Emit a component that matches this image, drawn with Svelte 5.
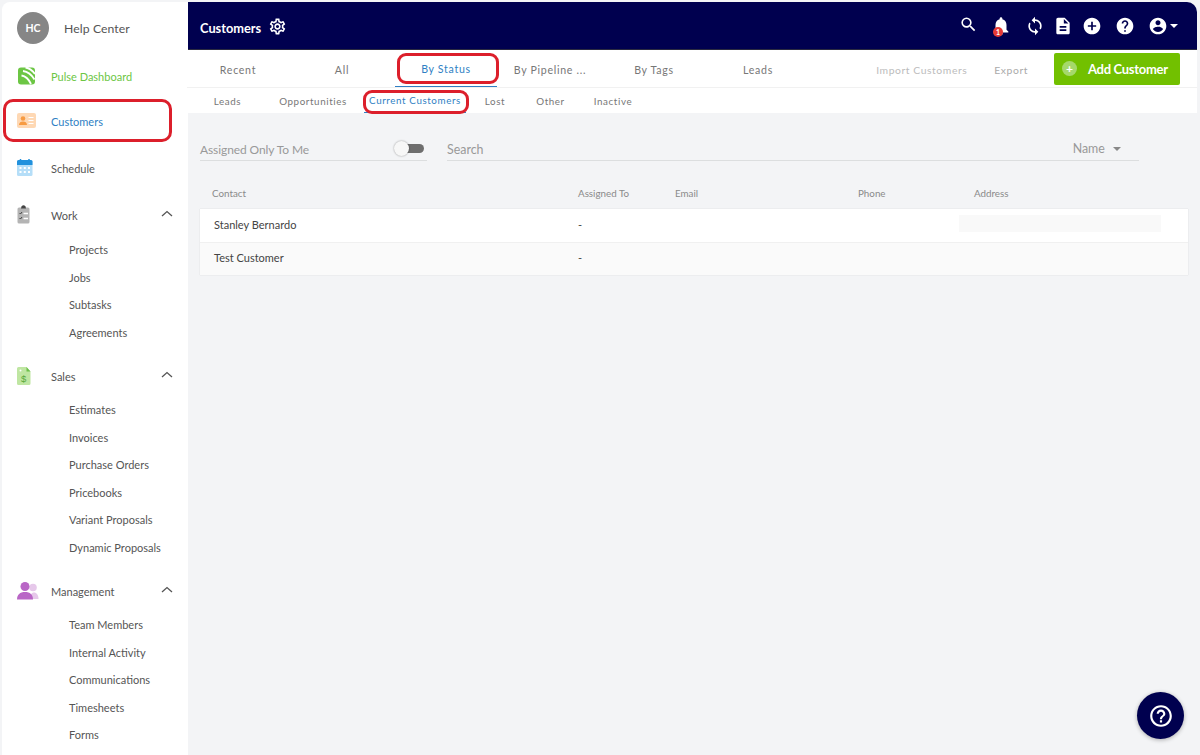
<script>
  const tabs = [
    { label: 'Recent' }, { label: 'All' }, { label: 'By Status', active: true, mark: true },
    { label: 'By Pipeline ...' }, { label: 'By Tags' }, { label: 'Leads' }
  ];
  const subs = [
    { label: 'Leads' }, { label: 'Opportunities' }, { label: 'Current Customers', active: true, mark: true },
    { label: 'Lost' }, { label: 'Other' }, { label: 'Inactive' }
  ];
  const icons = {
    search: 'M15.5 14h-.79l-.28-.27A6.471 6.471 0 0 0 16 9.5 6.5 6.5 0 1 0 9.5 16c1.61 0 3.09-.59 4.23-1.57l.27.28v.79l5 4.99L20.49 19l-4.99-5zm-6 0C7.01 14 5 11.99 5 9.5S7.01 5 9.5 5 14 7.01 14 9.5 11.99 14 9.5 14z',
    bell: 'M12 22c1.1 0 2-.9 2-2h-4c0 1.1.9 2 2 2zm6-6v-5c0-3.07-1.63-5.64-4.5-6.32V4c0-.83-.67-1.5-1.5-1.5s-1.5.67-1.5 1.5v.68C7.64 5.36 6 7.92 6 11v5l-2 2v1h16v-1l-2-2z',
    sync: 'M12 4V1L8 5l4 4V6c3.31 0 6 2.69 6 6 0 1.01-.25 1.97-.7 2.8l1.46 1.46C19.54 15.03 20 13.57 20 12c0-4.42-3.58-8-8-8zm0 14c-3.31 0-6-2.69-6-6 0-1.01.25-1.97.7-2.8L5.24 7.74C4.46 8.97 4 10.43 4 12c0 4.42 3.58 8 8 8v3l4-4-4-4v3z',
    doc: 'M14 2H6c-1.1 0-1.99.9-1.99 2L4 20c0 1.1.89 2 1.99 2H18c1.1 0 2-.9 2-2V8l-6-6zm2 16H8v-2h8v2zm0-4H8v-2h8v2zm-3-5V3.5L18.5 9H13z',
    add: 'M12 2C6.48 2 2 6.48 2 12s4.48 10 10 10 10-4.48 10-10S17.52 2 12 2zm5 11h-4v4h-2v-4H7v-2h4V7h2v4h4v2z',
    help: 'M12 2C6.48 2 2 6.48 2 12s4.48 10 10 10 10-4.48 10-10S17.52 2 12 2zm1 17h-2v-2h2v2zm2.07-7.75l-.9.92C13.45 12.9 13 13.5 13 15h-2v-.5c0-1.1.45-2.1 1.17-2.83l1.24-1.26c.37-.36.59-.86.59-1.41 0-1.1-.9-2-2-2s-2 .9-2 2H8c0-2.21 1.79-4 4-4s4 1.79 4 4c0 .88-.36 1.68-.93 2.25z',
    user: 'M12 2C6.48 2 2 6.48 2 12s4.48 10 10 10 10-4.48 10-10S17.52 2 12 2zm0 3c1.66 0 3 1.34 3 3s-1.34 3-3 3-3-1.34-3-3 1.34-3 3-3zm0 14.2c-2.5 0-4.71-1.28-6-3.22.03-1.99 4-3.08 6-3.08 1.99 0 5.97 1.09 6 3.08-1.29 1.94-3.5 3.22-6 3.22z',
    gear: 'M19.43 12.98c.04-.32.07-.64.07-.98 0-.34-.03-.66-.07-.98l2.11-1.65c.19-.15.24-.42.12-.64l-2-3.46c-.09-.16-.26-.25-.44-.25-.06 0-.12.01-.17.03l-2.49 1c-.52-.4-1.08-.73-1.69-.98l-.38-2.65C14.46 2.18 14.25 2 14 2h-4c-.25 0-.46.18-.49.42l-.38 2.65c-.61.25-1.17.59-1.69.98l-2.49-1c-.06-.02-.12-.03-.18-.03-.17 0-.34.09-.43.25l-2 3.46c-.13.22-.07.49.12.64l2.11 1.65c-.04.32-.07.65-.07.98 0 .33.03.66.07.98l-2.11 1.65c-.19.15-.24.42-.12.64l2 3.46c.09.16.26.25.44.25.06 0 .12-.01.17-.03l2.49-1c.52.4 1.08.73 1.69.98l.38 2.65c.03.24.24.42.49.42h4c.25 0 .46-.18.49-.42l.38-2.65c.61-.25 1.17-.59 1.69-.98l2.49 1c.06.02.12.03.18.03.17 0 .34-.09.43-.25l2-3.46c.12-.22.07-.49-.12-.64l-2.11-1.65zm-1.98-1.71c.04.31.05.52.05.73 0 .21-.02.43-.05.73l-.14 1.13.89.7 1.08.84-.7 1.21-1.27-.51-1.04-.42-.9.68c-.43.32-.84.56-1.25.73l-1.06.43-.16 1.13-.2 1.35h-1.4l-.19-1.35-.16-1.13-1.06-.43c-.43-.18-.83-.41-1.23-.71l-.91-.7-1.06.43-1.27.51-.7-1.21 1.08-.84.89-.7-.14-1.13c-.03-.31-.05-.54-.05-.74s.02-.43.05-.73l.14-1.13-.89-.7-1.08-.84.7-1.21 1.27.51 1.04.42.9-.68c.43-.32.84-.56 1.25-.73l1.06-.43.16-1.13.2-1.35h1.39l.19 1.35.16 1.13 1.06.43c.43.18.83.41 1.23.71l.91.7 1.06-.43 1.27-.51.7 1.21-1.07.85-.89.7.14 1.13zM12 8c-2.21 0-4 1.79-4 4s1.79 4 4 4 4-1.79 4-4-1.79-4-4-4zm0 6c-1.1 0-2-.9-2-2s.9-2 2-2 2 .9 2 2-.9 2-2 2z',
    helpOutline: 'M11 18h2v-2h-2v2zm1-16C6.48 2 2 6.48 2 12s4.48 10 10 10 10-4.48 10-10S17.52 2 12 2zm0 18c-4.41 0-8-3.59-8-8s3.59-8 8-8 8 3.59 8 8-3.59 8-8 8zm0-14c-2.21 0-4 1.79-4 4h2c0-1.1.9-2 2-2s2 .9 2 2c0 2-3 1.75-3 5h2c0-2.25 3-2.5 3-5 0-2.21-1.79-4-4-4z'
  };
  const sections = [
    { name: 'Work', icon: 'work', items: ['Projects', 'Jobs', 'Subtasks', 'Agreements'] },
    { name: 'Sales', icon: 'sales', items: ['Estimates', 'Invoices', 'Purchase Orders', 'Pricebooks', 'Variant Proposals', 'Dynamic Proposals'] },
    { name: 'Management', icon: 'mgmt', items: ['Team Members', 'Internal Activity', 'Communications', 'Timesheets', 'Forms'] }
  ];
  const rows = [
    { name: 'Stanley Bernardo', assigned: '-', loading: true },
    { name: 'Test Customer', assigned: '-' }
  ];
</script>

{#snippet sectionIcon(kind)}
  {#if kind === 'work'}
    <svg class="nav-icon" width="24" height="20" viewBox="0 0 24 20">
      <rect x="0.5" y="2.5" width="12" height="16" rx="1.5" fill="#b4b4b4"/>
      <path d="M4 3.5 L4.5 1.5 Q6.5 -0.8 8.5 1.5 L9 3.5Z" fill="#444"/>
      <path d="M2.5 8l1 1 1.5-2M2.5 13l1 1 1.5-2" stroke="#444" fill="none" stroke-width="1"/>
      <path d="M6.5 8.5h4.5M6.5 13.5h4.5" stroke="#fff" stroke-width="1.3"/>
    </svg>
  {:else if kind === 'sales'}
    <svg class="nav-icon" width="24" height="20" viewBox="0 0 24 20">
      <path d="M1.5 1h8l4 4.5v12a1.5 1.5 0 0 1-1.5 1.5H1.500a1.500 1.500 0 0 1-1.500-1.500V2.500A1.500 1.500 0 0 1 1.500 1z" fill="#bfe6a2"/>
      <path d="M9.500 1l4 4.500h-4z" fill="#6cc04a"/>
      <circle cx="3.500" cy="4.500" r="1" fill="#fff"/>
      <text x="6.700" y="16" font-size="9.500" text-anchor="middle" fill="#58a83a" font-family="Liberation Sans, sans-serif">$</text>
    </svg>
  {:else}
    <svg class="nav-icon" width="24" height="20" viewBox="0 0 24 20">
      <circle cx="16" cy="6.500" r="3.800" fill="#e6c8ea"/>
      <path d="M13 18c0-4 1.500-6.500 4-6.500s4.500 2.500 4.500 6.500z" fill="#e6c8ea"/>
      <circle cx="8" cy="5.500" r="4.500" fill="#b966c6"/>
      <path d="M0 18.500c0-5 3-7.500 8-7.500s8 2.500 8 7.500z" fill="#b966c6"/>
    </svg>
  {/if}
{/snippet}

<div class="frame">
  <aside class="sidebar">
    <div class="brand">
      <span class="avatar">HC</span>
      <span class="brand-name">Help Center</span>
    </div>

    <a class="nav pulse">
      <svg class="nav-icon" width="24" height="20" viewBox="0 0 24 20">
        <rect x="1" y="1.500" width="17" height="17" rx="3" fill="#6cc644"/>
        <path d="M6 5 Q13 6 17.500 13.500M4.500 9.500 Q10.500 10.500 14 18M8.500 1.500 Q14 2.500 18 8" stroke="#fff" stroke-width="1.800" fill="none"/>
      </svg>
      <span>Pulse Dashboard</span>
    </a>

    <a class="nav customers">
      <svg class="nav-icon" width="24" height="20" viewBox="0 0 24 20">
        <rect x="0" y="2" width="19" height="15" rx="2" fill="#fed8b4"/>
        <circle cx="6" cy="7.500" r="2.300" fill="#f79b42"/>
        <path d="M2 14c0-2.500 1.800-3.500 4-3.500s4 1 4 3.500z" fill="#f79b42"/>
        <path d="M11.500 6.500h5M11.500 9.500h5M11.500 12.500h5" stroke="#fff" stroke-width="1.200"/>
      </svg>
      <span>Customers</span>
    </a>

    <a class="nav schedule">
      <svg class="nav-icon" width="24" height="20" viewBox="0 0 24 20">
        <rect x="0" y="2" width="15.500" height="16" rx="1.500" fill="#b5def8"/>
        <path d="M0 7V3.500A1.500 1.500 0 0 1 1.500 2h12.500a1.500 1.500 0 0 1 1.500 1.500V7z" fill="#2191dd"/>
        <path d="M3.500 1v2M12 1v2" stroke="#2191dd" stroke-width="1.500"/>
        <path d="M2.500 10h2M6.800 10h2M11 10h2M2.500 14h2M6.800 14h2M11 14h2" stroke="#fff" stroke-width="2"/>
      </svg>
      <span>Schedule</span>
    </a>

    {#each sections as section}
      <section class="group {section.icon}">
        <div class="nav head">
          {@render sectionIcon(section.icon)}
          <span>{section.name}</span>
          <svg class="chevron" width="12" height="7" viewBox="0 0 12 7"><path d="M1 6l5-4.500L11 6" fill="none" stroke="#555" stroke-width="1.300"/></svg>
        </div>
        <ul>
          {#each section.items as item}
            <li>{item}</li>
          {/each}
        </ul>
      </section>
    {/each}
  </aside>

  <div class="main">
    <header class="topbar">
      <h1>Customers</h1>
      <svg class="gear" width="19" height="19" viewBox="0 0 24 24"><path d={icons.gear}/></svg>
      <div class="top-icons">
        <svg class="i-search" width="19" height="19" viewBox="0 0 24 24"><path d={icons.search}/></svg>
        <span class="bell">
          <svg width="22" height="22" viewBox="0 0 24 24"><path d={icons.bell}/></svg>
          <b>1</b>
        </span>
        <svg class="i-sync" width="20" height="20" viewBox="0 0 24 24"><path d={icons.sync}/></svg>
        <svg class="i-doc" width="20" height="20" viewBox="0 0 24 24"><path d={icons.doc}/></svg>
        <svg class="i-add" width="20" height="20" viewBox="0 0 24 24"><path d={icons.add}/></svg>
        <svg class="i-help" width="20" height="20" viewBox="0 0 24 24"><path d={icons.help}/></svg>
        <span class="account">
          <svg width="20" height="20" viewBox="0 0 24 24"><path d={icons.user}/></svg>
          <i class="caret white"></i>
        </span>
      </div>
    </header>

    <nav class="tabs">
      {#each tabs as t}
        <button class="tab" class:active={t.active} class:mark={t.mark}>{t.label}</button>
      {/each}
      <div class="actions">
        <span class="action import">Import Customers</span>
        <span class="action export">Export</span>
        <button class="add">
          <span class="add-dot">+</span>
          Add Customer
        </button>
      </div>
    </nav>

    <nav class="subtabs">
      {#each subs as s}
        <button class="sub" class:active={s.active} class:mark={s.mark}>{s.label}</button>
      {/each}
    </nav>

    <div class="content">
      <div class="filters">
        <label class="assigned">
          <span>Assigned Only To Me</span>
          <span class="toggle"><i></i></span>
        </label>
        <div class="search">
          <span>Search</span>
          <span class="sort">Name <i class="caret grey"></i></span>
        </div>
      </div>

      <div class="thead">
        <span>Contact</span><span>Assigned To</span><span>Email</span><span>Phone</span><span>Address</span>
      </div>
      <div class="tbody">
        {#each rows as r, i}
          <div class="row" class:alt={i % 2 === 1}>
            <span>{r.name}</span>
            <span>{r.assigned}</span>
            <span></span>
            <span></span>
            <span class="addr">{#if r.loading}<i class="skeleton"></i>{/if}</span>
          </div>
        {/each}
      </div>
    </div>
  </div>

  <button class="fab" aria-label="Help">
    <svg width="26" height="26" viewBox="0 0 24 24"><path d={icons.helpOutline}/></svg>
  </button>
</div>

<style>
  :global(html), :global(body) { margin: 0; background: #f3f4f6; }
  .frame {
    height: 755px;
    box-sizing: border-box;
    padding: 2px 3px 0 2px;
    display: flex;
    overflow: hidden;
    position: relative;
    font-family: Lato, "Noto Sans", sans-serif;
    color: #555;
  }
  button { font-family: inherit; border: 0; background: none; padding: 0; }

  .sidebar {
    width: 186px;
    flex: none;
    background: #fff;
    border-top-left-radius: 8px;
    font-size: 11px;
  }
  .brand { display: flex; align-items: center; height: 52px; padding-left: 15px; }
  .avatar {
    width: 32px; height: 32px; border-radius: 50%; background: #868686; color: #fff;
    font-size: 10.5px; font-weight: 700; display: flex; align-items: center; justify-content: center;
  }
  .brand-name { margin-left: 15px; font-size: 12.200px; letter-spacing: .1px; color: #555; }

  .nav { display: flex; align-items: center; height: 22px; padding-left: 15px; position: relative; color: #555; }
  .nav-icon { flex: none; margin-right: 10px; }
  .pulse { margin-top: 11px; color: #6cc644; }
  .customers { margin-top: 23px; color: #2f7fc4; }
  .customers::after {
    content: ""; position: absolute; left: 1px; top: -11px; width: 163px; height: 37px;
    border: 3px solid #dc1f2b; border-radius: 10px;
  }
  .schedule { margin-top: 25px; }
  .group { margin-top: 25px; }
  .group ul { list-style: none; margin: 10px 0 0; padding: 0 0 0 67px; }
  .group li { height: 27.500px; line-height: 27.500px; margin: 0; white-space: nowrap; }
  .group.sales { margin-top: 19px; }
  .group.mgmt { margin-top: 19px; }
  .group.sales ul { margin-top: 9px; }
  .group.mgmt ul { margin-top: 9px; }
  .head span { flex: 1; }
  .chevron { position: absolute; right: 15px; top: 6px; }

  .main { flex: 1; min-width: 0; display: flex; flex-direction: column; }
  .topbar {
    height: 47px; box-sizing: content-box; background: #00004f; color: #fff; display: flex; align-items: center;
    padding-left: 12px; border-top-right-radius: 10px; border-bottom: 1px solid #2a2a40; flex: none;
  }
  .topbar h1 { margin: 4px 0 0; font-size: 12.800px; font-weight: 700; }
  .gear { fill: #fff; margin: 2px 0 0 7px; }
  .top-icons { margin-left: auto; display: flex; align-items: center; padding-right: 19px; }
  .top-icons svg { fill: #fff; display: block; }
  .i-search { margin-top: -2px; }
  .i-sync { margin-left: 13px; }
  .i-doc { margin-left: 8px; }
  .i-add { margin-left: 9px; }
  .i-help, .account { margin-left: 13px; }
  .bell { position: relative; margin-left: 12px; }
  .bell b {
    position: absolute; left: 3px; bottom: 0; width: 10px; height: 10px; border-radius: 50%; background: #e53935;
    color: #fff; font-size: 7px; line-height: 10px; text-align: center; font-weight: 700;
  }
  .account { display: flex; align-items: center; }
  .caret { display: inline-block; width: 0; height: 0; border-left: 4px solid transparent; border-right: 4px solid transparent; }
  .caret.white { border-top: 4px solid #fff; margin-left: 2px; }
  .caret.grey { border-top: 4px solid #888; margin-left: 5px; vertical-align: middle; }

  .tabs {
    height: 37px; background: #fff; display: flex; align-items: center; gap: 2px;
    border-bottom: 1px solid #f1f1f1; flex: none; margin-left: -1px;
  }
  .tab {
    width: 102px; height: 37px; font-size: 10.600px; letter-spacing: .7px; color: #777;
    position: relative; white-space: nowrap; padding-top: 2px;
  }
  .tab.active { color: #2f7fc4; border-bottom: 1px solid #2f7fc4; }
  .tab.mark::after {
    content: ""; position: absolute; left: 2px; top: 3px; width: 96px; height: 25px;
    border: 3px solid #dc1f2b; border-radius: 9px;
  }
  .actions { margin-left: auto; display: flex; align-items: center; padding-right: 17px; }
  .action { font-size: 10.400px; letter-spacing: .55px; color: #bcbcbc; white-space: nowrap; margin-top: 2px; }
  .export { margin-left: 27px; margin-right: 26px; color: #aaa; }
  .add {
    width: 126px; height: 32px; background: #72c000; color: #fff; border-radius: 2px;
    display: flex; align-items: center; font-size: 13px; letter-spacing: -.3px; font-weight: 700; padding-left: 8px; gap: 11px;
  }
  .add-dot {
    width: 15px; height: 15px; border-radius: 50%; background: #a5d86a; font-size: 12px; line-height: 15px; text-align: center; letter-spacing: 0;
  }

  .subtabs {
    height: 25px; background: #fff; display: grid; grid-template-columns: 69px 102px 102px 58px 53px 72px;
    padding-left: 5px; flex: none; align-items: stretch;
  }
  .sub { font-size: 9.800px; letter-spacing: .6px; color: #777; position: relative; white-space: nowrap; }
  .sub.active { color: #2f7fc4; border-bottom: 1px solid #2f7fc4; }
  .sub.mark::after {
    content: ""; position: absolute; left: 0; top: 2px; width: 100px; height: 18px;
    border: 3px solid #dc1f2b; border-radius: 9px; box-sizing: content-box; margin-left: -1px;
  }

  .content { flex: 1; background: #f3f4f6; padding: 0 9px 0 12px; }
  .filters { display: flex; margin-top: 20px; gap: 20px; height: 28px; padding-right: 49px; font-size: 12.400px; color: #999; }
  .assigned, .search { display: flex; align-items: center; border-bottom: 1px solid #dcdedf; padding-top: 6px; box-sizing: border-box; }
  .assigned { width: 227px; justify-content: space-between; flex: none; font-size: 12px; letter-spacing: -.1px; }
  .search { flex: 1; justify-content: space-between; padding-right: 18px; }
  .sort { white-space: nowrap; margin-top: -3px; }
  .toggle { width: 30px; height: 15px; position: relative; margin-right: 3px; margin-top: -2px; }
  .toggle::before { content: ""; position: absolute; left: 4px; right: 0; top: 3px; height: 9px; border-radius: 5px; background: #6e6e6e; }
  .toggle i { position: absolute; left: 0; top: 0; width: 15px; height: 15px; border-radius: 50%; background: #f7f7f7; box-shadow: 0 0 2px rgba(0,0,0,.4); }

  .thead, .row { display: grid; grid-template-columns: 366px 97px 183px 116px 1fr; }
  .thead { padding: 0 0 10px 12px; margin-top: 25px; height: 23px; box-sizing: border-box; font-size: 9.800px; color: #8a8a8a; align-items: center; }
  .tbody { width: 988px; background: #fff; box-shadow: 0 0 1px rgba(0,0,0,.18); }
  .row { padding: 0 0 2px 14px; height: 33px; box-sizing: border-box; align-items: center; font-size: 11px; color: #444; grid-template-columns: 364px 97px 183px 116px 1fr; }
  .row.alt { background: #fafafa; border-top: 1px solid #f0f0f0; padding-bottom: 3px; }
  .addr { position: relative; height: 100%; }
  .skeleton { position: absolute; left: -15px; top: 6px; width: 202px; height: 17px; background: #f9f9f9; }

  .fab {
    position: absolute; right: 16px; bottom: 16px; width: 47px; height: 47px; border-radius: 50%;
    background: #00004f; display: flex; align-items: center; justify-content: center;
    box-shadow: 0 1px 4px rgba(0,0,0,.3);
  }
  .fab svg { fill: #fff; }
</style>
